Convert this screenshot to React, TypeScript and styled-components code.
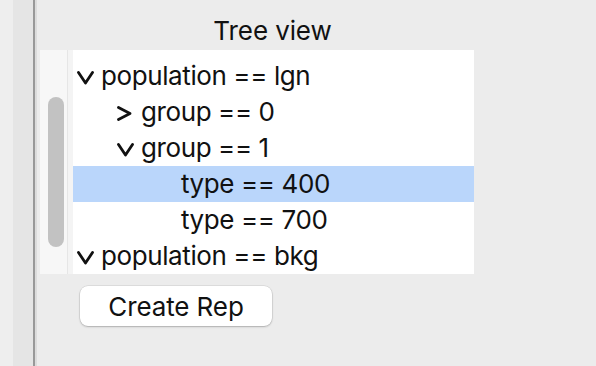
import React from "react";
import styled, { createGlobalStyle } from "styled-components";

const GlobalStyle = createGlobalStyle`
  html, body {
    margin: 0;
    padding: 0;
    background: #ececec;
  }
  body {
    font-family: Inter, "Liberation Sans", sans-serif;
    color: #111;
    overflow: hidden;
  }
`;

const Window = styled.div`
  display: flex;
  width: 596px;
  height: 366px;
  background: #ececec;
`;

const Strip = styled.div<{ $w: number; $bg: string }>`
  flex: none;
  width: ${({ $w }) => $w}px;
  background: ${({ $bg }) => $bg};
`;

const Main = styled.div`
  display: flex;
  flex-direction: column;
  padding-left: 3px;
`;

const Title = styled.div`
  width: 465px;
  padding-top: 16px;
  margin-bottom: 4px;
  font-size: 26px;
  line-height: 30px;
  letter-spacing: -0.1px;
  text-align: center;
`;

const Panel = styled.div`
  display: flex;
  width: 434px;
  height: 224px;
`;

const Track = styled.div`
  flex: none;
  width: 27px;
  padding-top: 47px;
  background: #f7f7f7;
  border-right: 1px solid #e6e6e6;
`;

const Thumb = styled.div`
  width: 16px;
  height: 150px;
  margin-left: 8px;
  border-radius: 8px;
  background: #c2c2c2;
`;

const Gutter = styled.div`
  flex: none;
  width: 5px;
  background: #f4f4f4;
`;

const TreeBody = styled.div`
  flex: 1;
  padding-top: 8px;
  background: #fff;
  overflow: hidden;
`;

const Row = styled.div<{ $level: number; $selected?: boolean }>`
  display: flex;
  align-items: center;
  height: 36px;
  padding-left: ${({ $level }) => 4 + $level * 40}px;
  background: ${({ $selected }) => ($selected ? "#bad6fb" : "transparent")};
`;

const Toggle = styled.span`
  flex: none;
  display: flex;
  width: 24px;
  padding-top: 3px;
`;

const Label = styled.span`
  font-size: 26px;
  line-height: 36px;
  letter-spacing: -0.4px;
  white-space: nowrap;
`;

const Button = styled.button`
  width: 192px;
  height: 40px;
  margin: 12px 0 0 40px;
  padding: 0;
  border: none;
  border-radius: 8px;
  background: #fff;
  box-shadow: 0 0 0 0.5px rgba(0, 0, 0, 0.12), 0 1px 2px rgba(0, 0, 0, 0.22);
  font-family: Inter, "Liberation Sans", sans-serif;
  font-size: 26px;
  letter-spacing: -0.1px;
  color: #111;
`;

const ChevronDown = () => (
  <svg width="17" height="14" viewBox="0 0 17 14">
    <polyline points="1.5,1.5 8.5,12 15.5,1.5" fill="none" stroke="#111" strokeWidth="2.8" strokeLinecap="round" strokeLinejoin="round" />
  </svg>
);

const ChevronRight = () => (
  <svg width="15" height="15" viewBox="0 0 15 15">
    <polyline points="1.5,1.5 13,7.5 1.5,13.5" fill="none" stroke="#111" strokeWidth="2.8" strokeLinecap="round" strokeLinejoin="round" />
  </svg>
);

type Node = { label: string; level: number; open?: boolean; leaf?: boolean; selected?: boolean };

const nodes: Node[] = [
  { label: "population == lgn", level: 0, open: true },
  { label: "group == 0", level: 1, open: false },
  { label: "group == 1", level: 1, open: true },
  { label: "type == 400", level: 2, leaf: true, selected: true },
  { label: "type == 700", level: 2, leaf: true },
  { label: "population == bkg", level: 0, open: true },
];

export default function App() {
  return (
    <>
      <GlobalStyle />
      <Window>
        <Strip $w={13} $bg="#eeeeee" />
        <Strip $w={20} $bg="#e5e5e5" />
        <Strip $w={2} $bg="#999999" />
        <Strip $w={2} $bg="#dcdcdc" />
        <Main>
          <Title>Tree view</Title>
          <Panel>
            <Track>
              <Thumb />
            </Track>
            <Gutter />
            <TreeBody>
              {nodes.map((n) => (
                <Row key={n.label} $level={n.level} $selected={n.selected}>
                  <Toggle>{n.leaf ? null : n.open ? <ChevronDown /> : <ChevronRight />}</Toggle>
                  <Label>{n.label}</Label>
                </Row>
              ))}
            </TreeBody>
          </Panel>
          <Button>Create Rep</Button>
        </Main>
      </Window>
    </>
  );
}
